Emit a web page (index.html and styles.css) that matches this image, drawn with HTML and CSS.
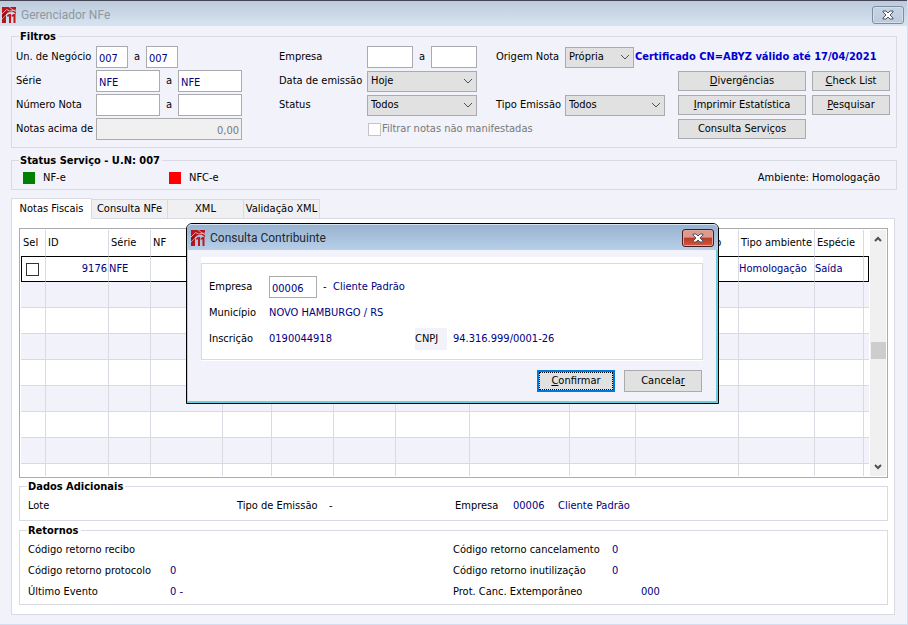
FILE: index.html
```html
<!DOCTYPE html>
<html lang="pt-BR">
<head>
  <meta charset="UTF-8" />
  <meta name="viewport" content="width=device-width, initial-scale=1.0"/>
  <title>Gerenciador NFe</title>
  <link rel="stylesheet" href="styles.css">
</head>
<body>

  <svg class="sprite" aria-hidden="true">
    <symbol id="logo" viewBox="0 0 28 32">
      <path d="M0 0H28V14L21 9L12 11L8 15V32H0Z" fill="#b5161d"/>
      <path d="M0 14L9 5L15 8L28 6M14 0L28 10M0 24L8 15" fill="none" stroke="#ead6dc" stroke-width="1.5"/>
      <path d="M0 16L7 11L8 14L0 23Z" fill="#8f1015"/>
      <path d="M10 17L14 14H18V32H14V19H10ZM19 17L23 14H27V32H23V19H19Z" fill="#c3151c"/>
    </symbol>
    <symbol id="close" viewBox="0 0 12 10">
      <path d="M1 1H4L6 3L8 1H11V2L8 5L11 8V9H8L6 7L4 9H1V8L4 5L1 2Z" fill="#fff" stroke="#4b5262" stroke-width="1"/>
    </symbol>
  </svg>

  <div class="window">
    <header class="titlebar">
      <svg class="logo"><use href="#logo"/></svg>
      <h1>Gerenciador NFe</h1>
      <button class="close" type="button" aria-label="Fechar"><svg><use href="#close"/></svg></button>
    </header>

    <main>
      <!-- FILTROS -->
      <fieldset class="group filters">
        <legend>Filtros</legend>
        <div class="filter-col">
          <div class="row">
            <label for="un1">Un. de Negócio</label>
            <input class="w32" type="text" id="un1" value="007">
            <label class="to" for="un2">a</label>
            <input class="w32" type="text" id="un2" value="007">
          </div>
          <div class="row">
            <label for="serie1">Série</label>
            <input class="w64" type="text" id="serie1" value="NFE">
            <label class="to" for="serie2">a</label>
            <input class="w64" type="text" id="serie2" value="NFE">
          </div>
          <div class="row">
            <label for="num1">Número Nota</label>
            <input class="w64" type="text" id="num1">
            <label class="to" for="num2">a</label>
            <input class="w64" type="text" id="num2">
          </div>
          <div class="row">
            <label for="acima">Notas acima de</label>
            <input class="w146" type="text" id="acima" value="0,00" disabled>
          </div>
        </div>

        <div class="filter-col mid">
          <div class="row">
            <label for="emp1">Empresa</label>
            <input class="w46" type="text" id="emp1">
            <label class="to" for="emp2">a</label>
            <input class="w46" type="text" id="emp2">
          </div>
          <div class="row">
            <label for="data">Data de emissão</label>
            <select class="w110" id="data"><option>Hoje</option></select>
          </div>
          <div class="row">
            <label for="status">Status</label>
            <select class="w110" id="status"><option>Todos</option></select>
          </div>
          <div class="row check">
            <input type="checkbox" id="manifest" disabled>
            <label for="manifest">Filtrar notas não manifestadas</label>
          </div>
        </div>

        <div class="filter-col last">
          <div class="row">
            <label for="origem">Origem Nota</label>
            <select class="w69" id="origem"><option>Própria</option></select>
            <strong class="cert">Certificado CN=ABYZ válido até 17/04/2021</strong>
          </div>
          <div class="row">
            <div class="actions">
              <button type="button"><u>D</u>ivergências</button>
              <button type="button"><u>C</u>heck List</button>
            </div>
          </div>
          <div class="row">
            <label for="tipo">Tipo Emissão</label>
            <select class="w100" id="tipo"><option>Todos</option></select>
            <div class="actions">
              <button type="button"><u>I</u>mprimir Estatística</button>
              <button type="button"><u>P</u>esquisar</button>
            </div>
          </div>
          <div class="row">
            <div class="actions">
              <button type="button">Consulta Servi<u>ç</u>os</button>
            </div>
          </div>
        </div>
      </fieldset>

      <!-- STATUS -->
      <fieldset class="group service">
        <legend>Status Serviço - U.N: 007</legend>
        <span class="light green">NF-e</span>
        <span class="light red">NFC-e</span>
        <span class="ambient">Ambiente: Homologação</span>
      </fieldset>

      <!-- ABAS -->
      <div class="tabs" role="tablist">
        <button class="active" type="button" role="tab" aria-selected="true">Notas Fiscais</button>
        <button type="button" role="tab">Consulta NFe</button>
        <button type="button" role="tab">XML</button>
        <button type="button" role="tab">Validação XML</button>
      </div>

      <section class="panel">
        <div class="grid">
          <div class="grid-view">
            <table>
              <colgroup>
                <col class="c-sel"><col class="c-id"><col class="c-serie"><col class="c-nf"><col class="c-a"><col class="c-b"><col class="c-b"><col class="c-d"><col class="c-e"><col class="c-f"><col class="c-g"><col class="c-amb"><col class="c-esp"><col>
              </colgroup>
              <thead>
                <tr><th>Sel</th><th>ID</th><th>Série</th><th>NF</th><th></th><th></th><th></th><th></th><th></th><th></th><th>Data de emissão</th><th>Tipo ambiente</th><th>Espécie</th><th></th></tr>
              </thead>
              <tbody>
                <tr class="current"><td><input type="checkbox" aria-label="Selecionar nota 9176"></td><td class="right">9176</td><td>NFE</td><td></td><td></td><td></td><td></td><td></td><td></td><td></td><td></td><td>Homologação</td><td>Saída</td><td></td></tr>
                <tr><td></td><td></td><td></td><td></td><td></td><td></td><td></td><td></td><td></td><td></td><td></td><td></td><td></td><td></td></tr>
                <tr><td></td><td></td><td></td><td></td><td></td><td></td><td></td><td></td><td></td><td></td><td></td><td></td><td></td><td></td></tr>
                <tr><td></td><td></td><td></td><td></td><td></td><td></td><td></td><td></td><td></td><td></td><td></td><td></td><td></td><td></td></tr>
                <tr><td></td><td></td><td></td><td></td><td></td><td></td><td></td><td></td><td></td><td></td><td></td><td></td><td></td><td></td></tr>
                <tr><td></td><td></td><td></td><td></td><td></td><td></td><td></td><td></td><td></td><td></td><td></td><td></td><td></td><td></td></tr>
                <tr><td></td><td></td><td></td><td></td><td></td><td></td><td></td><td></td><td></td><td></td><td></td><td></td><td></td><td></td></tr>
                <tr><td></td><td></td><td></td><td></td><td></td><td></td><td></td><td></td><td></td><td></td><td></td><td></td><td></td><td></td></tr>
                <tr><td></td><td></td><td></td><td></td><td></td><td></td><td></td><td></td><td></td><td></td><td></td><td></td><td></td><td></td></tr>
              </tbody>
            </table>
          </div>
          <div class="scrollbar">
            <svg viewBox="0 0 8 6"><path d="M1 5L4 2L7 5"/></svg>
            <span class="thumb"></span>
            <svg viewBox="0 0 8 6"><path d="M1 1L4 4L7 1"/></svg>
          </div>
        </div>

        <fieldset class="group extra">
          <legend>Dados Adicionais</legend>
          <span class="x-lote">Lote</span>
          <span class="x-tipo">Tipo de Emissão</span>
          <span class="x-dash">-</span>
          <span class="x-emp">Empresa</span>
          <span class="x-cod value">00006</span>
          <span class="value">Cliente Padrão</span>
        </fieldset>

        <fieldset class="group returns">
          <legend>Retornos</legend>
          <span>Código retorno recibo</span><span></span>
          <span>Código retorno cancelamento</span><span class="value">0</span>
          <span>Código retorno protocolo</span><span class="value">0</span>
          <span>Código retorno inutilização</span><span class="value">0</span>
          <span>Último Evento</span><span class="value">0 -</span>
          <span>Prot. Canc. Extemporâneo</span><span class="value far">000</span>
        </fieldset>
      </section>
    </main>
  </div>

  <!-- CONSULTA CONTRIBUINTE -->
  <div class="dialog" role="dialog" aria-labelledby="dlgTitle">
    <header class="titlebar">
      <svg class="logo"><use href="#logo"/></svg>
      <h2 id="dlgTitle">Consulta Contribuinte</h2>
      <button class="close" type="button" aria-label="Fechar"><svg><use href="#close"/></svg></button>
    </header>
    <div class="dialog-body">
      <div class="sheet">
        <div class="fields">
          <div class="row">
            <label for="empresa">Empresa</label>
            <input class="w48" type="text" id="empresa" value="00006">
            <span class="dash">-</span>
            <span class="value">Cliente Padrão</span>
          </div>
          <div class="row">
            <span class="caption">Município</span>
            <span class="value">NOVO HAMBURGO / RS</span>
          </div>
          <div class="row">
            <span class="caption">Inscrição</span>
            <span class="value inscr">0190044918</span>
            <span class="cnpj">CNPJ</span>
            <span class="value">94.316.999/0001-26</span>
          </div>
        </div>
      </div>
      <div class="dialog-buttons">
        <button class="default" type="button"><span><u>C</u>onfirmar</span></button>
        <button type="button">Cancela<u>r</u></button>
      </div>
    </div>
  </div>

</body>
</html>
```
FILE: styles.css
```css
* {
  box-sizing: border-box;
}

body {
  margin: 0;
  background-color: #f2f2fa;
  font-family: "DejaVu Sans Condensed", sans-serif;
  font-size: 11px;
  line-height: 14px;
  color: #000;
  white-space: nowrap;
}

button,
input,
select {
  font: inherit;
  color: inherit;
  margin: 0;
  border-radius: 0;
}

.sprite {
  display: none;
}

.window {
  min-height: 100vh;
  border: solid #d3deee;
  border-width: 0 1px 1px 0;
}

/* barras de título */
.titlebar {
  display: flex;
  align-items: center;
  gap: 5px;
  height: 26px;
  padding: 3px 3px 0 2px;
  border-top: 1px solid #454555;
  background: linear-gradient(#bccbdc, #d7e4f0);
  color: #8f979f;
}

.titlebar h1,
.titlebar h2 {
  flex: 1;
  margin: 0;
  font-family: Roboto, sans-serif;
  font-size: 12px;
  font-weight: normal;
}

.logo {
  width: 14px;
  height: 16px;
}

.close {
  display: flex;
  align-items: center;
  justify-content: center;
  width: 32px;
  height: 18px;
  padding: 0;
  border: 1px solid #7d8ba5;
  border-radius: 3px;
  background: linear-gradient(#c6d3e3, #bccbdd);
  box-shadow: inset 0 0 0 1px #d3deea;
}

.close svg {
  width: 12px;
  height: 10px;
}

main {
  padding: 2px 10px 9px 11px;
}

/* grupos */
.group {
  min-width: 0;
  margin: 0;
  padding: 0;
  border: 1px solid #dadbe2;
}

.group legend {
  margin-left: -1px;
  padding: 2px 2px 0 1px;
  font-weight: bold;
}

.row {
  display: flex;
  align-items: center;
  height: 24px;
}

.filters {
  display: flex;
  padding: 1px 6px 6px 4px;
}

.filters legend {
  margin-left: 3px;
}

.filter-col {
  width: 263px;
}

.filter-col .row > label:first-child {
  width: 80px;
}

.filter-col.mid {
  width: 217px;
}

.mid .row > label:first-child {
  width: 88px;
}

.filter-col.last {
  flex: 1;
}

.last .row > label:first-child {
  width: 69px;
}

.row > .to {
  width: 18px;
  text-align: center;
}

input[type="text"] {
  height: 22px;
  padding: 2px 2px 0;
  border: 1px solid #a9abae;
  background-color: #fff;
  color: #000080;
}

input[type="text"]:disabled {
  background-color: #f0f0f0;
  color: #787878;
  text-align: right;
}

select {
  height: 21px;
  padding: 0 3px;
  border: 1px solid #a9abae;
  appearance: none;
  background: #e1e1e1 url("data:image/svg+xml,%3Csvg xmlns='http://www.w3.org/2000/svg' width='10' height='6'%3E%3Cpath d='M1 1l4 4 4-4' fill='none' stroke='%23505050'/%3E%3C/svg%3E") no-repeat right 3px center;
}

.w32 { width: 32px; }
.w46 { width: 46px; }
.w48 { width: 48px; }
.w64 { width: 64px; }
.w69 { width: 69px; }
.w100 { width: 100px; }
.w110 { width: 110px; }
.w146 { width: 146px; }

.check {
  gap: 1px;
  padding-left: 89px;
  color: #787878;
}

.check input,
.current input {
  appearance: none;
  flex-shrink: 0;
  width: 13px;
  height: 13px;
  border: 1px solid #c4c4c8;
  background-color: #fff;
}

.cert {
  margin-left: 1px;
  color: #0000d0;
}

.actions {
  display: grid;
  grid-template-columns: 128px 78px;
  gap: 6px;
  margin-left: auto;
}

.actions button,
.dialog-buttons button {
  height: 20px;
  padding: 0;
  border: 1px solid #a9abae;
  background-color: #e1e1e1;
}

.service {
  display: flex;
  margin-top: 4px;
  padding: 3px 16px 4px 11px;
}

.service legend {
  margin-left: -4px;
}

.light {
  display: flex;
  align-items: center;
  gap: 8px;
  width: 146px;
}

.light::before {
  content: "";
  width: 12px;
  height: 12px;
}

.green::before {
  background-color: #008000;
}

.red::before {
  background-color: #f00;
}

.ambient {
  margin-left: auto;
}

/* abas */
.tabs {
  display: flex;
  align-items: flex-end;
  margin-top: 8px;
}

.tabs button {
  width: 76px;
  height: 19px;
  padding: 0;
  border: 1px solid #dadbe2;
  border-width: 1px 1px 0 0;
  background-color: #f0f0f2;
}

.tabs .active {
  width: 81px;
  height: 21px;
  margin-bottom: -1px;
  padding-bottom: 1px;
  border-left-width: 1px;
  background-color: #fff;
}

.panel {
  margin-right: 2px;
  padding: 9px 6px 9px 7px;
  border: 1px solid #dadbe2;
  background-color: #fff;
}

.grid {
  display: flex;
  height: 250px;
  padding: 1px;
  border: 1px solid #a9abae;
}

.grid-view {
  flex: 1;
  overflow: hidden;
}

table {
  width: 100%;
  table-layout: fixed;
  border-collapse: separate;
  border-spacing: 0;
}

.c-sel { width: 25px; }
.c-id { width: 63px; }
.c-serie { width: 42px; }
.c-nf { width: 72px; }
.c-a { width: 49px; }
.c-b { width: 62px; }
.c-d { width: 74px; }
.c-e { width: 100px; }
.c-f { width: 66px; }
.c-g { width: 103px; }
.c-amb { width: 76px; }
.c-esp { width: 49px; }

th,
td {
  height: 26px;
  padding: 0 2px;
  border: solid #dadbe2;
  border-width: 0 1px 1px 0;
  text-align: left;
}

th {
  height: 27px;
  border-bottom: 1px solid #000;
  font-weight: normal;
}

th:last-child,
td:last-child {
  border-right-width: 0;
}

td {
  padding: 0 1px 0 0;
  color: #000080;
}

tbody tr:nth-child(even) {
  background-color: #f2f2fa;
}

.current td {
  height: 25px;
  border-bottom-color: #000;
}

.current td:first-child {
  padding-left: 4px;
  border-left: 1px solid #000;
}

.current td:last-child {
  border-right: 1px solid #000;
}

.current input {
  display: block;
  border-color: #333;
}

td.right {
  text-align: right;
}

.scrollbar {
  display: flex;
  flex-direction: column;
  align-items: center;
  justify-content: space-between;
  width: 16px;
  margin-left: 1px;
  padding: 6px 0;
  background-color: #f0f0f0;
}

.scrollbar svg {
  width: 8px;
  height: 6px;
  fill: none;
  stroke: #505050;
  stroke-width: 2;
}

.thumb {
  width: 15px;
  height: 17px;
  margin-bottom: 5px;
  background-color: #cdcdcd;
}

.extra {
  display: flex;
  padding: 5px 8px 7px;
}

.x-lote { width: 209px; }
.x-tipo { width: 92px; }
.x-dash { width: 126px; }
.x-emp { width: 58px; }
.x-cod { width: 45px; }

.value {
  color: #000080;
}

.returns {
  display: grid;
  grid-template-columns: 142px 283px 159px 1fr;
  row-gap: 7px;
  margin-top: 1px;
  padding: 5px 8px 5px;
}

.far {
  padding-left: 29px;
}

/* janela de consulta */
.dialog {
  position: absolute;
  left: 186px;
  top: 223px;
  width: 533px;
  border: 1px solid #000;
  border-radius: 6px 6px 0 0;
  background-color: #f2f2fa;
  box-shadow: inset -2px -2px 0 #6ad0e0, inset 1px 0 0 #a9d8ea;
}

.dialog .titlebar {
  padding: 1px 4px 0;
  border-top: 1px solid #d5e4f2;
  border-radius: 5px 5px 0 0;
  background: linear-gradient(#98b3d0, #b8cfe8);
  color: #1c2733;
}

.dialog .close {
  border-color: #4c1b20;
  background: linear-gradient(#dc9a90 45%, #b93a26 50%, #cc5b40);
  box-shadow: inset 0 0 0 1px #e0a59c;
}

.dialog-body {
  padding: 7px 15px 11px 14px;
}

.sheet {
  padding: 6px 0 1px;
  background-color: #fff;
}

.fields {
  padding: 10px 7px 7px;
  border: 1px solid #dadbe2;
}

.fields .row {
  height: 26px;
}

.fields label,
.caption {
  width: 60px;
}

.dash {
  width: 10px;
  margin-left: 6px;
}

.inscr {
  width: 146px;
}

.cnpj {
  width: 32px;
  margin-right: 6px;
  padding: 4px 0;
  background-color: #f2f2fa;
}

.dialog-buttons {
  display: flex;
  justify-content: flex-end;
  gap: 9px;
  margin-top: 9px;
  padding-right: 1px;
}

.dialog-buttons button {
  width: 78px;
  height: 22px;
}

.dialog-buttons .default {
  border: 2px solid #0078d7;
}

.default span {
  display: block;
  height: 18px;
  border: 1px dotted #000;
  line-height: 16px;
}
```
